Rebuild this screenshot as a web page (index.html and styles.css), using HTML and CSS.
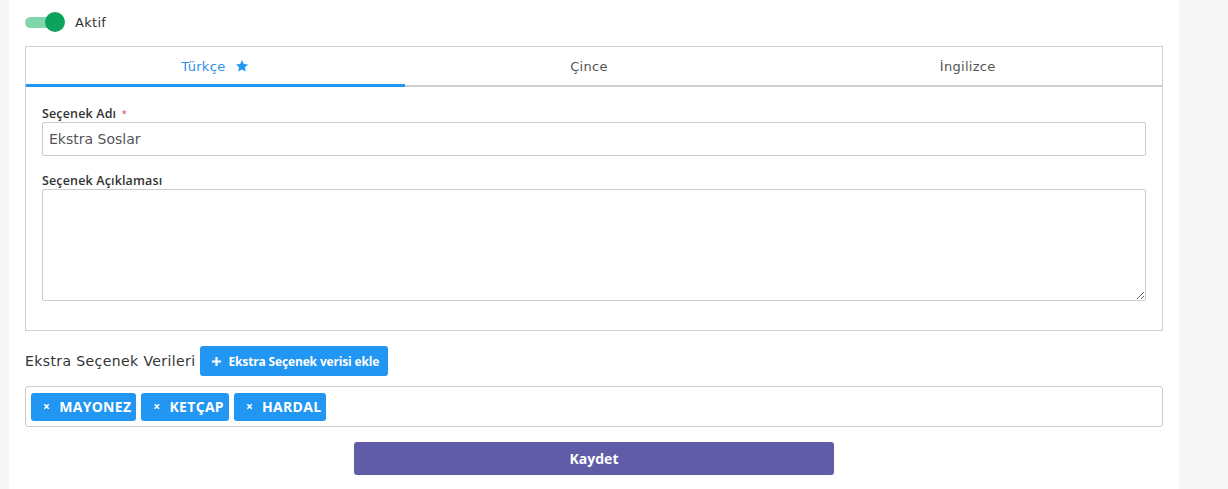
FILE: index.html
```html
<!DOCTYPE html>
<html lang="tr">
<head>
<meta charset="utf-8">
<title>Seçenek</title>
<link rel="stylesheet" href="styles.css">
</head>
<body>
<div class="panel">
  <div class="switch-row">
    <span class="switch"><span class="track"></span><span class="knob"></span></span>
    <span class="switch-label">Aktif</span>
  </div>

  <div class="tabbox">
    <div class="tabs">
      <div class="tab active"><span>Türkçe</span>
        <svg class="star" viewBox="0 0 24 24" width="14" height="14"><path d="M12 1.8l3.1 6.6 7.2.9-5.3 5 1.4 7.1L12 17.9l-6.4 3.5L7 14.3l-5.3-5 7.2-.9z" fill="#2196f3"/></svg>
      </div>
      <div class="tab"><span class="shift">Çince</span></div>
      <div class="tab"><span class="shift">İngilizce</span></div>
    </div>
    <div class="tab-body">
      <label class="label">Seçenek Adı <span class="req">*</span></label>
      <input class="input" type="text" value="Ekstra Soslar">
      <label class="label second">Seçenek Açıklaması</label>
      <textarea class="textarea"></textarea>
    </div>
  </div>

  <div class="extra-row">
    <span class="extra-title">Ekstra Seçenek Verileri</span>
    <button class="btn-add">
      <svg viewBox="0 0 12 12" width="11" height="11"><path d="M6 1v10M1 6h10" stroke="#fff" stroke-width="2.4" stroke-linecap="butt"/></svg>
      Ekstra Seçenek verisi ekle
    </button>
  </div>

  <div class="tagbox">
    <span class="tag"><span class="x">×</span>MAYONEZ</span>
    <span class="tag"><span class="x">×</span>KETÇAP</span>
    <span class="tag"><span class="x">×</span>HARDAL</span>
  </div>

  <div class="save-row">
    <button class="btn-save">Kaydet</button>
  </div>
</div>
</body>
</html>
```

FILE: styles.css
```css
* { box-sizing: border-box; }
html, body { margin: 0; padding: 0; }
body {
  background: #f7f7f7;
  font-family: "DejaVu Sans", "Open Sans", sans-serif;
  color: #333;
  height: 489px;
  overflow: hidden;
}
.panel {
  margin-left: 9px;
  width: 1170px;
  min-height: 489px;
  background: #fff;
  padding: 12px 16px 0 16px;
}
.switch-row {
  display: flex;
  align-items: center;
  height: 20px;
}
.switch {
  position: relative;
  width: 40px;
  height: 20px;
  display: inline-block;
}
.track {
  position: absolute;
  left: 0;
  top: 5px;
  width: 32px;
  height: 11px;
  border-radius: 6px;
  background: #80d5ab;
}
.knob {
  position: absolute;
  left: 20px;
  top: 0;
  width: 20px;
  height: 20px;
  border-radius: 50%;
  background: #0ca35c;
}
.switch-label {
  margin-left: 10px;
  font-size: 13px;
  letter-spacing: 0.3px;
  color: #333;
}
.tabbox {
  margin-top: 14px;
  border: 1px solid #cfcfcf;
}
.tabs {
  display: flex;
  border-bottom: 2px solid #d0d0d0;
  height: 40px;
}
.tab {
  flex: 1 1 0;
  min-width: 0;
  display: flex;
  align-items: center;
  justify-content: center;
  padding-top: 1px;
  font-size: 13px;
  letter-spacing: 0.3px;
  color: #555;
  margin-bottom: -2px;
  border-bottom: 3px solid transparent;
}
.tab .shift { margin-right: 10px; }
.tab.active {
  color: #2f8fe8;
  border-bottom-color: #2196f3;
}
.star { margin-left: 10px; }
.tab-body {
  padding: 19px 16px 29px 16px;
  display: flex;
  flex-direction: column;
}
.label {
  font-family: "Open Sans", sans-serif;
  font-size: 12.5px;
  font-weight: 600;
  letter-spacing: 0.15px;
  color: #333;
  height: 16px;
  line-height: 16px;
}
.label.second { margin-top: 17px; }
.req { color: #e0606a; font-size: 9px; vertical-align: top; margin-left: 2px; }
.input {
  height: 34px;
  border: 1px solid #ccc;
  border-radius: 2px;
  padding: 0 6px;
  font-family: inherit;
  font-size: 14px;
  color: #555;
  outline: none;
}
.textarea {
  height: 112px;
  border: 1px solid #ccc;
  border-radius: 2px;
  resize: vertical;
  font-family: inherit;
  outline: none;
}
.extra-row {
  display: flex;
  align-items: center;
  margin-top: 15px;
  height: 30px;
}
.extra-title {
  font-size: 14px;
  letter-spacing: 0.4px;
  color: #333;
  margin-right: 5px;
}
.btn-add {
  display: flex;
  align-items: center;
  gap: 6px;
  height: 30px;
  padding: 0 9px 0 11px;
  background: #2196f3;
  color: #fff;
  border: none;
  border-radius: 3px;
  font-family: "Open Sans", sans-serif;
  font-weight: 700;
  font-size: 12px;
  letter-spacing: -0.15px;
}
.tagbox {
  margin-top: 10px;
  height: 41px;
  border: 1px solid #ccc;
  border-radius: 3px;
  display: flex;
  align-items: center;
  padding: 0 5px;
  gap: 5px;
}
.tag {
  display: inline-flex;
  align-items: center;
  height: 28px;
  background: #2196f3;
  color: #fff;
  border-radius: 3px;
  padding: 0 5px 0 12px;
  font-family: "Open Sans", sans-serif;
  font-size: 14px;
  font-weight: 700;
  letter-spacing: 0.3px;
}
.tag .x {
  font-size: 12px;
  margin-right: 9px;
}
.save-row {
  display: flex;
  justify-content: center;
  margin-top: 15px;
}
.btn-save {
  width: 480px;
  height: 33px;
  background: #605ca8;
  color: #fff;
  border: none;
  border-radius: 3px;
  font-family: "Open Sans", sans-serif;
  font-weight: 700;
  font-size: 14px;
}
```
